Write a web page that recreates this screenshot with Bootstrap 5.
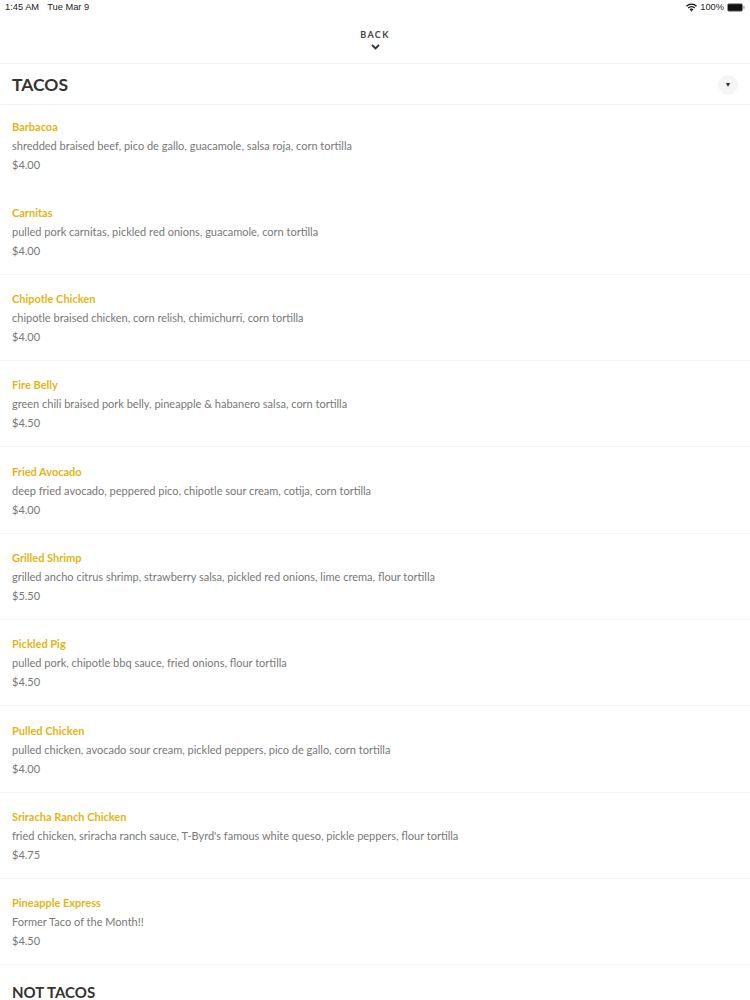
<!DOCTYPE html>
<html lang="en">
<head>
<meta charset="utf-8">
<title>Menu</title>
<link href="https://cdn.jsdelivr.net/npm/bootstrap@5.3.0/dist/css/bootstrap.min.css" rel="stylesheet">
<style>
html,body{height:1000px;overflow:hidden}
body{font-family:Lato,"Liberation Sans",sans-serif;background:#fff;color:#333}
.status-strip{height:14px;font-family:"Liberation Sans",sans-serif;font-size:9.3px;line-height:14px;color:#222;padding:0 5px}
.back-strip{height:50px;border-bottom:1px solid #f1f1f1}
.back-label{font-size:9px;font-weight:700;letter-spacing:1.4px;line-height:11px;color:#444;margin-top:15px}
.section-head{height:41px;border-bottom:1px solid #f1f1f1;padding:1px 12px 0}
.section-name{font-size:17.5px;font-weight:700;color:#333;line-height:24px;margin:0}
.toggle-dot{width:20px;height:20px;border-radius:50%;background:#f5f5f5;font-size:7px;color:#333}
.dish{height:86.33px;border-bottom:1px solid #f6f6f6;padding:14.5px 12px 0;font-size:11px;line-height:19px;color:#777}
.dish-name{color:#e3b412;font-weight:700;font-size:11px}
.dish-first{height:83.3px;padding-top:11.5px;border-bottom-color:#fdfdfd}
.tail-head{padding:20px 12px 0}
.tail-head .section-name{font-size:15px;line-height:14px}
.status-right{gap:3px}
</style>
</head>
<body>
<div class="status-strip d-flex justify-content-between align-items-center">
  <div class="d-flex gap-2"><span>1:45 AM</span><span>Tue Mar 9</span></div>
  <div class="status-right d-flex align-items-center">
    <svg width="11" height="9" viewBox="0 0 22 17" aria-hidden="true"><path d="M1 6a14 14 0 0 1 20 0M4.500 9.500a9 9 0 0 1 13 0M8 13a4 4 0 0 1 6 0" fill="none" stroke="#111" stroke-width="2.600"/><path d="M11 17l-2.500-3h5z" fill="#111"/></svg>
    <span>100%</span>
    <svg width="18" height="9" viewBox="0 0 19 9" aria-hidden="true"><rect x=".5" y=".5" width="16" height="8" rx="1.500" fill="#111" stroke="#999"/><rect x="17.300" y="3" width="1.200" height="3" fill="#999"/></svg>
  </div>
</div>
<div class="back-strip d-flex flex-column align-items-center">
  <div class="back-label">BACK</div>
  <svg class="mt-1" width="9" height="6" viewBox="0 0 9 6" aria-hidden="true"><path d="M1 1l3.500 3.500L8 1" fill="none" stroke="#333" stroke-width="1.800"/></svg>
</div>
<div class="section-head d-flex justify-content-between align-items-center">
  <h2 class="section-name">TACOS</h2>
  <div class="toggle-dot d-flex justify-content-center align-items-center">▼</div>
</div>
<div class="dish dish-first"><div class="dish-name">Barbacoa</div><div>shredded braised beef, pico de gallo, guacamole, salsa roja, corn tortilla</div><div>$4.00</div></div>
<div class="dish"><div class="dish-name">Carnitas</div><div>pulled pork carnitas, pickled red onions, guacamole, corn tortilla</div><div>$4.00</div></div>
<div class="dish"><div class="dish-name">Chipotle Chicken</div><div>chipotle braised chicken, corn relish, chimichurri, corn tortilla</div><div>$4.00</div></div>
<div class="dish"><div class="dish-name">Fire Belly</div><div>green chili braised pork belly, pineapple &amp; habanero salsa, corn tortilla</div><div>$4.50</div></div>
<div class="dish"><div class="dish-name">Fried Avocado</div><div>deep fried avocado, peppered pico, chipotle sour cream, cotija, corn tortilla</div><div>$4.00</div></div>
<div class="dish"><div class="dish-name">Grilled Shrimp</div><div>grilled ancho citrus shrimp, strawberry salsa, pickled red onions, lime crema, flour tortilla</div><div>$5.50</div></div>
<div class="dish"><div class="dish-name">Pickled Pig</div><div>pulled pork, chipotle bbq sauce, fried onions, flour tortilla</div><div>$4.50</div></div>
<div class="dish"><div class="dish-name">Pulled Chicken</div><div>pulled chicken, avocado sour cream, pickled peppers, pico de gallo, corn tortilla</div><div>$4.00</div></div>
<div class="dish"><div class="dish-name">Sriracha Ranch Chicken</div><div>fried chicken, sriracha ranch sauce, T-Byrd's famous white queso, pickle peppers, flour tortilla</div><div>$4.75</div></div>
<div class="dish"><div class="dish-name">Pineapple Express</div><div>Former Taco of the Month!!</div><div>$4.50</div></div>
<div class="tail-head"><h2 class="section-name">NOT TACOS</h2></div>
<script src="https://cdn.jsdelivr.net/npm/bootstrap@5.3.0/dist/js/bootstrap.bundle.min.js"></script>
</body>
</html>
